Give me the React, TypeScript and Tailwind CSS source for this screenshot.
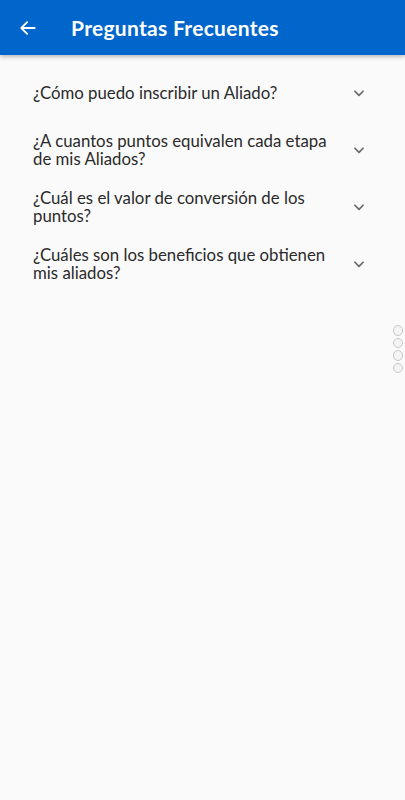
import React from "react";

const items = [
  "¿Cómo puedo inscribir un Aliado?",
  "¿A cuantos puntos equivalen cada etapa de mis Aliados?",
  "¿Cuál es el valor de conversión de los puntos?",
  "¿Cuáles son los beneficios que obtienen mis aliados?",
];

function Chevron() {
  return (
    <svg width="14" height="14" viewBox="0 0 24 24" fill="none" stroke="#6b6b6b" strokeWidth="3" strokeLinecap="round" strokeLinejoin="round">
      <path d="M5 9l7 7 7-7" />
    </svg>
  );
}

export default function App() {
  return (
    <div className="relative w-[405px] h-[800px] bg-[#fafafa] overflow-hidden" style={{ fontFamily: "Lato, 'Open Sans', sans-serif" }}>
      <header className="h-[55px] bg-[#0066cc] flex items-center shadow-[0_2px_4px_rgba(0,0,0,0.25)]">
        <div className="w-[71px] flex items-center pl-[18px]">
          <svg width="20" height="20" viewBox="0 0 24 24" fill="none" stroke="white" strokeWidth="2.2" strokeLinecap="round" strokeLinejoin="round">
            <path d="M20 12H4M11 5l-7 7 7 7" />
          </svg>
        </div>
        <h1 className="text-white text-[21px] font-bold tracking-[0.3px]">Preguntas Frecuentes</h1>
      </header>
      <ul className="pt-[9px]">
        {items.map((q) => (
          <li key={q} className="h-[57px] flex items-center pl-[33px] pr-[39px]">
            <span className="flex-1 text-[16.8px] leading-[18px] text-[#2a2a2a] pr-[14px]">{q}</span>
            <Chevron />
          </li>
        ))}
      </ul>
      <div className="absolute right-[2px] top-[325px] flex flex-col gap-[2px]">
        {[0, 1, 2, 3].map((i) => (
          <div key={i} className="w-[10.5px] h-[10.5px] rounded-full border border-[#c8c8c8] bg-[#f4f4f4]" />
        ))}
      </div>
    </div>
  );
}
